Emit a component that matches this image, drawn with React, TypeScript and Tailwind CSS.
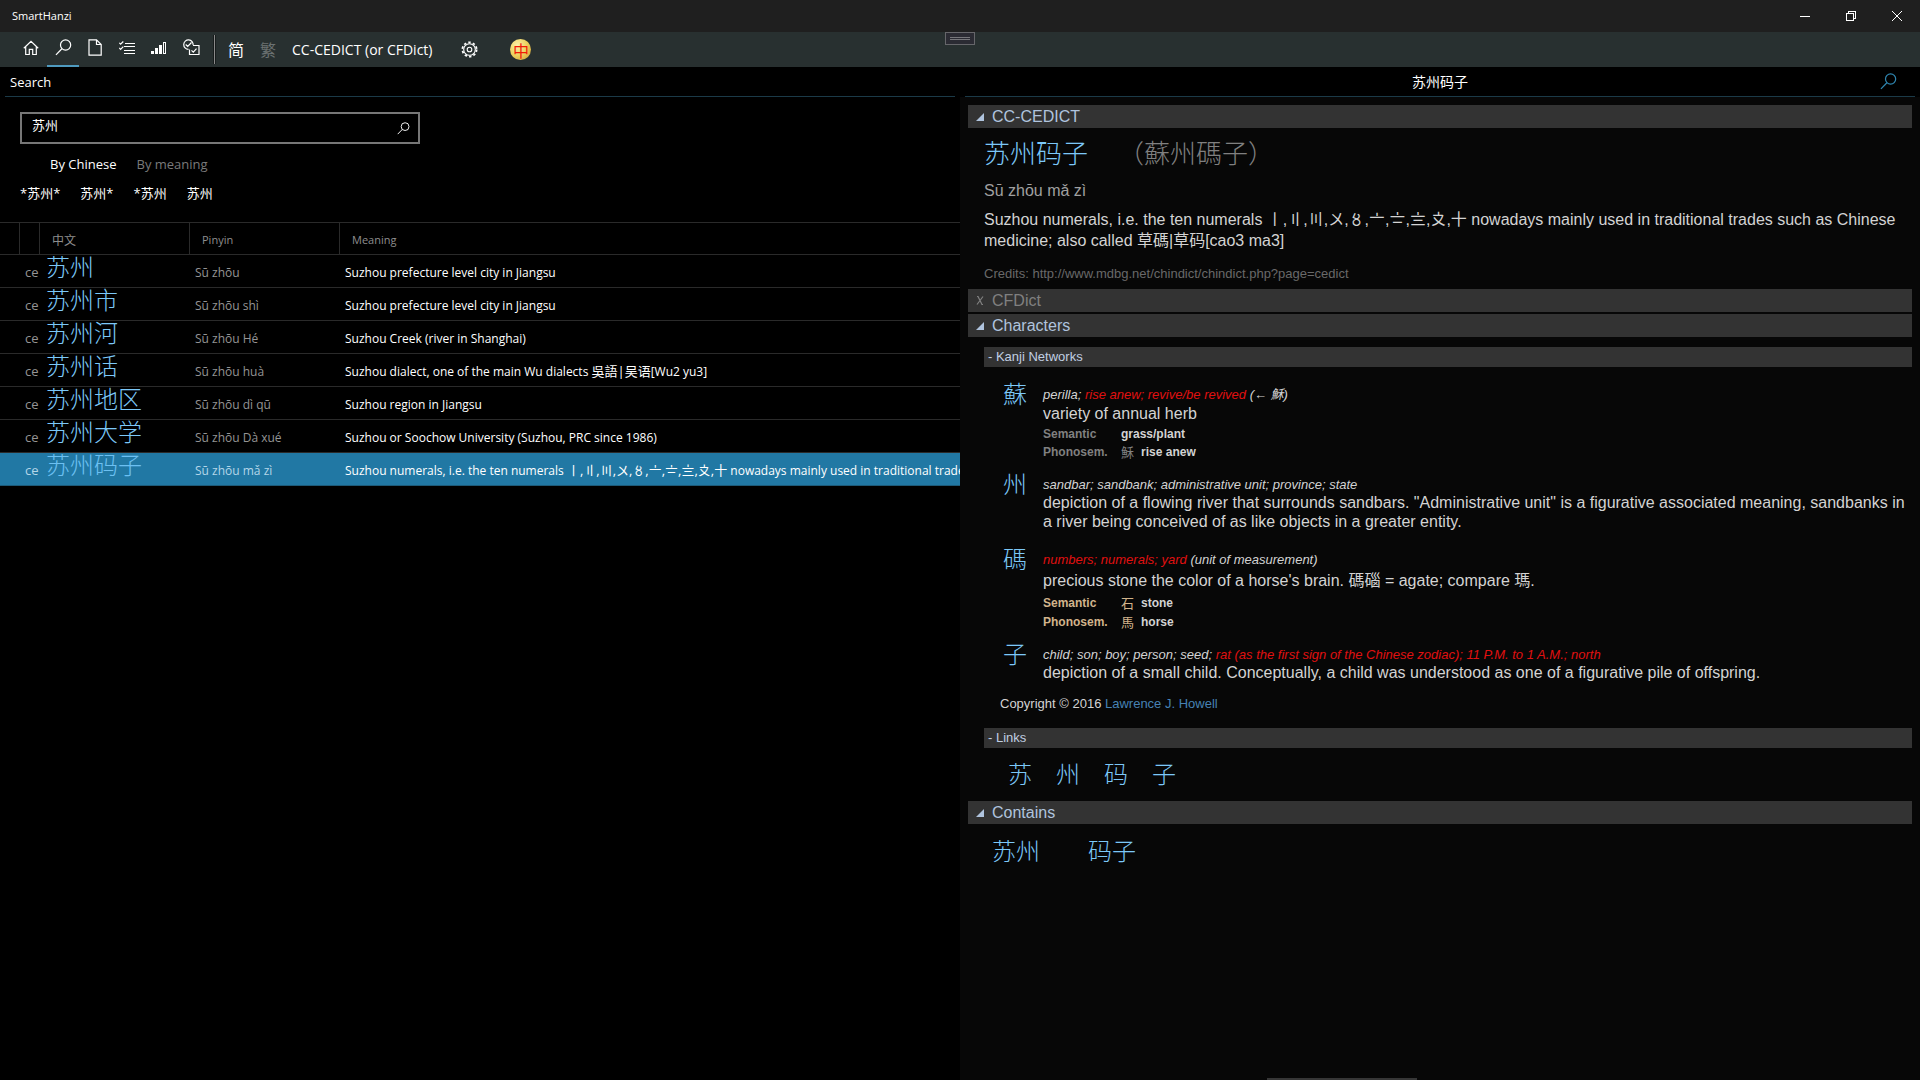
import React from "react";

const HAN = "font-['Noto_Sans_CJK_SC',sans-serif] font-light";

type Word = { hanzi: string; pinyin: string; meaning: string };

const words: Word[] = [
  { hanzi: "苏州", pinyin: "Sū zhōu", meaning: "Suzhou prefecture level city in Jiangsu" },
  { hanzi: "苏州市", pinyin: "Sū zhōu shì", meaning: "Suzhou prefecture level city in Jiangsu" },
  { hanzi: "苏州河", pinyin: "Sū zhōu Hé", meaning: "Suzhou Creek (river in Shanghai)" },
  { hanzi: "苏州话", pinyin: "Sū zhōu huà", meaning: "Suzhou dialect, one of the main Wu dialects 吳語|吴语[Wu2 yu3]" },
  { hanzi: "苏州地区", pinyin: "Sū zhōu dì qū", meaning: "Suzhou region in Jiangsu" },
  { hanzi: "苏州大学", pinyin: "Sū zhōu Dà xué", meaning: "Suzhou or Soochow University (Suzhou, PRC since 1986)" },
  {
    hanzi: "苏州码子",
    pinyin: "Sū zhōu mǎ zì",
    meaning: "Suzhou numerals, i.e. the ten numerals 〡,〢,〣,〤,〥,〦,〧,〨,〩,十 nowadays mainly used in traditional trades",
  },
];
const SELECTED = 6;

/* Sets runs of Chinese characters one pixel larger than the Latin text round them. */
function Mixed({ text }: { text: string }) {
  return (
    <>
      {text.split(/([\u3021-\u3029\u4e00-\u9fff][\u3021-\u3029\u4e00-\u9fff,|]*)/).map((part, i) =>
        i % 2 === 1 ? (
          <span key={i} className="text-[13px] leading-none">
            {part}
          </span>
        ) : (
          part
        ),
      )}
    </>
  );
}

function Magnifier({ className }: { className: string }) {
  return (
    <svg viewBox="0 0 18 18" className={className} fill="none" stroke="currentColor" strokeWidth="1.3">
      <circle cx="11.2" cy="6.4" r="5.4" />
      <path d="M7.3 10.3 1 16.8" />
    </svg>
  );
}

function ToolButton({ label, active, children }: { label: string; active?: boolean; children: React.ReactNode }) {
  return (
    <button
      aria-label={label}
      className={
        active
          ? "flex h-full w-8 items-center justify-center border-b-2 border-[#4f9bc0] pt-0.5 pb-1"
          : "flex h-full w-8 items-center justify-center border-b-2 border-transparent pt-0.5 pb-1"
      }
    >
      {children}
    </button>
  );
}

function TitleBar() {
  return (
    <header className="flex h-8 items-center justify-between bg-[#1f1f1f] pl-3">
      <h1 className="text-[11px]">SmartHanzi</h1>
      <div className="flex h-full">
        <button aria-label="Minimize" className="flex w-[46px] items-center justify-center">
          <svg className="size-[10px]" viewBox="0 0 10 10" stroke="white" shapeRendering="crispEdges">
            <path d="M0 5.5h10" />
          </svg>
        </button>
        <button aria-label="Restore" className="flex w-[46px] items-center justify-center">
          <svg className="size-[10px]" viewBox="0 0 10 10" stroke="white" fill="none" shapeRendering="crispEdges">
            <path d="M.5 2.5h7v7h-7zM2.5 2.5v-2h7v7h-2" />
          </svg>
        </button>
        <button aria-label="Close" className="flex w-[46px] items-center justify-center">
          <svg className="size-[10px]" viewBox="0 0 10 10" stroke="white">
            <path d="M0 0l10 10M10 0 0 10" />
          </svg>
        </button>
      </div>
    </header>
  );
}

function ToolBar() {
  return (
    <nav className="relative flex h-[35px] items-center bg-[#283030] pl-[15px]">
      <ToolButton label="Home">
        <svg className="size-4" viewBox="0 0 16 16" fill="none" stroke="currentColor" strokeWidth="1.2">
          <path d="M.8 8.3 8 1.4l7.2 6.9M2.7 6.8v7.7h3.6V9.3h3.4v5.2h3.6V6.8" />
        </svg>
      </ToolButton>
      <ToolButton label="Search" active>
        <Magnifier className="size-[17px]" />
      </ToolButton>
      <ToolButton label="Page">
        <svg className="h-[17px] w-[14px]" viewBox="0 0 14 17" fill="none" stroke="currentColor" strokeWidth="1.2">
          <path d="M1 .8h7.5l4.7 4.7v10.7H1zM8.5.8v4.7h4.7" />
        </svg>
      </ToolButton>
      <ToolButton label="Lists">
        <svg className="h-[14px] w-4" viewBox="0 0 16 14" fill="none" stroke="currentColor">
          <path d="M6 2.5h10M5 5.5h11M5 9.5h11M5 12.5h11" shapeRendering="crispEdges" />
          <path d="M.3 1.8 1.6 3.2 4.3.5M.3 7 1.6 8.4 4.3 5.7" strokeWidth="1.2" />
        </svg>
      </ToolButton>
      <ToolButton label="Levels">
        <svg className="h-[14px] w-4" viewBox="0 0 16 14" fill="currentColor" shapeRendering="crispEdges">
          <path d="M0 10h3v3H0zM4 7h3v6H4zM8 4h3v9H8z" />
          <path d="M12.5 1.5h2v11h-2z" fill="none" stroke="currentColor" />
        </svg>
      </ToolButton>
      <ToolButton label="Tests">
        <svg className="h-[17px] w-[17px]" viewBox="0 0 17 17" fill="none" stroke="currentColor" strokeWidth="1.2">
          <path d="M5.5 10.3A4.7 4.7 0 1 1 10.1 6.2M10 6.5h6v9H6.5v-5M2.7 5.5l2 2 3.8-4M8.5 11.3l1.8 1.8 3.2-3.4" />
        </svg>
      </ToolButton>
      <div className="ml-1.5 h-[29px] w-[3px] border-x border-x-[#171c1c] bg-[#8a8a8a]" />
      <button className="ml-3 text-base leading-6">简</button>
      <button className="ml-4 text-base leading-6 text-[#6c7272]">繁</button>
      <button className="ml-4 text-sm">CC-CEDICT (or CFDict)</button>
      <button aria-label="Settings" className="ml-[29px]">
        <svg className="size-[17px]" viewBox="0 0 17 17" fill="none" stroke="currentColor" strokeWidth="1.1">
          <circle cx="8.5" cy="8.5" r="2.3" />
          <circle cx="8.5" cy="8.5" r="5.8" />
          <circle cx="8.5" cy="8.5" r="7.1" strokeWidth="1.8" strokeDasharray="2.4 2.176" />
        </svg>
      </button>
      <button aria-label="About" className="ml-8">
        <span className="flex size-[21px] items-center justify-center rounded-full bg-radial-[at_35%_30%] from-[#fbf0a8] via-[#ecd25e] to-[#c9942c] font-['Noto_Sans_CJK_SC',sans-serif] text-base leading-none text-[#f01c08]">
          中
        </span>
      </button>
      <div className="absolute top-0 left-1/2 flex h-[13px] w-[30px] -translate-x-1/2 items-center justify-center border border-[#66666a] bg-[#2b2b33]">
        <div className="h-[3px] w-5 border-y border-[#77777b]" />
      </div>
    </nav>
  );
}

function SearchPane() {
  return (
    <section className="flex min-w-0 flex-col bg-black text-[13px]">
      <div className="mx-[5px] flex h-[30px] items-center border-b border-[#1b3a48] px-[5px] pt-0.5">
        <h2>Search</h2>
      </div>
      <form className="mt-[15px] ml-5 flex h-8 w-[400px] items-center border-2 border-[#777] pr-2 pl-2.5" onSubmit={(e) => e.preventDefault()}>
        <input aria-label="Search text" defaultValue="苏州" className="min-w-0 flex-1 bg-transparent pb-1 outline-none" />
        <button aria-label="Search">
          <Magnifier className="size-[13px]" />
        </button>
      </form>
      <div className="mt-[10px] ml-[50px] flex gap-5 leading-5">
        <button>By Chinese</button>
        <button className="text-[#7a7a7a]">By meaning</button>
      </div>
      <div className="mt-[9px] ml-5 flex gap-5 leading-5">
        <button>*苏州*</button>
        <button>苏州*</button>
        <button>*苏州</button>
        <button>苏州</button>
      </div>
      <table className="mt-[19px] w-full table-fixed border-separate border-spacing-0 text-left">
        <colgroup>
          <col className="w-5" />
          <col className="w-5" />
          <col className="w-[150px]" />
          <col className="w-[150px]" />
          <col />
        </colgroup>
        <thead>
          <tr className="h-[33px] text-[11px] text-[#8e8e8e] [&>th]:border-y [&>th]:border-r [&>th]:border-[#2a2a2a] [&>th]:p-0 [&>th]:pt-1 [&>th]:font-normal">
            <th />
            <th />
            <th className="!pl-3 text-xs">中文</th>
            <th className="!pl-3">Pinyin</th>
            <th className="!border-r-0 !pl-3">Meaning</th>
          </tr>
        </thead>
        <tbody>
          {words.map((w, i) => (
            <tr
              key={w.hanzi}
              className={
                i === SELECTED
                  ? "h-[33px] bg-[#2178a4] text-xs text-[#b4d6e8] [&>td]:border-b [&>td]:border-[#1d5a78] [&>td]:p-0"
                  : "h-[33px] text-xs text-[#949494] [&>td]:border-b [&>td]:border-[#2a2a2a] [&>td]:p-0"
              }
            >
              <td />
              <td className="!pt-1 !pl-[5px] text-[13px] whitespace-nowrap">ce</td>
              <td className="!pl-1.5 align-top">
                <a
                  href="#"
                  className={
                    i === SELECTED
                      ? `${HAN} block text-2xl leading-[22px] text-[#6cc0f2]`
                      : `${HAN} block text-2xl leading-[22px] text-[#7cc8f8]`
                  }
                >
                  {w.hanzi}
                </a>
              </td>
              <td className="!pt-1 !pl-[5px]">{w.pinyin}</td>
              <td className="overflow-hidden !pt-1 !pl-[5px] whitespace-nowrap text-white">
                <Mixed text={w.meaning} />
              </td>
            </tr>
          ))}
        </tbody>
      </table>
    </section>
  );
}

function SectionBar({ title, open = true }: { title: string; open?: boolean }) {
  return (
    <h3>
      <button
        className={
          open
            ? "flex h-[23px] w-full items-center gap-2 bg-[#333] pl-2 text-base text-[#b0c4de]"
            : "flex h-[23px] w-full items-center gap-2 bg-[#333] pl-2 text-base text-[#808080]"
        }
      >
        {open ? (
          <svg className="size-2" viewBox="0 0 8 8" fill="currentColor">
            <path d="M8 0v8H0z" />
          </svg>
        ) : (
          <svg className="h-[9px] w-2" viewBox="0 0 8 9" fill="none" stroke="currentColor" strokeWidth="1.2">
            <path d="M1 .5h1l4 8h1M7 .5 1 8.5" />
          </svg>
        )}
        {title}
      </button>
    </h3>
  );
}

function SubBar({ title }: { title: string }) {
  return (
    <h4>
      <button className="flex h-5 w-full items-center bg-[#333] pl-1 text-[13px] text-[#c0cfe2]">- {title}</button>
    </h4>
  );
}

function Entry({ glyph, gloss, children }: { glyph: string; gloss: React.ReactNode; children: React.ReactNode }) {
  return (
    <article className="grid grid-cols-[40px_1fr] items-start pl-[19px]">
      <a href="#" className={`${HAN} text-2xl leading-5 text-[#7cc8f8]`}>
        {glyph}
      </a>
      <div>
        <p className="pt-1 text-[13px] leading-4 italic">{gloss}</p>
        {children}
      </div>
    </article>
  );
}

function Part({ label, glyph, meaning, color }: { label: string; glyph?: string; meaning: string; color: string }) {
  return (
    <p className="grid grid-cols-[78px_auto_1fr] text-xs leading-[18px] font-bold">
      <span className={color}>{label}</span>
      <span className={color}>
        {glyph ? <span className="mr-[7px] font-['Noto_Sans_CJK_SC',sans-serif] text-[13px] font-normal">{glyph}</span> : null}
      </span>
      <span>{meaning}</span>
    </p>
  );
}

const red = "text-[#e01010]";

function DetailPane() {
  return (
    <section className="flex min-w-0 flex-col bg-[#070707]">
      <div className="bg-black px-[5px]">
        <div className="grid h-[30px] grid-cols-[1fr_auto_1fr] items-center border-b border-[#1b3a48]">
          <span />
          <h2 className="text-sm leading-5">苏州码子</h2>
          <button aria-label="Search" className="mr-[18px] justify-self-end text-[#2f86b0]">
            <Magnifier className="size-[17px]" />
          </button>
        </div>
      </div>
      <div className="mt-2 flex-1 pr-2 pl-2 font-['Liberation_Sans','Noto_Sans_CJK_SC',sans-serif] text-[#d3d3d3]">
        <SectionBar title="CC-CEDICT" />
        <div className="pl-4">
          <p className={`${HAN} flex gap-[30px] pt-[10px] text-[26px] leading-7`}>
            <a href="#" className="text-[#7cc8f8]">苏州码子</a>
            <span className="text-[#808080]">（蘇州碼子）</span>
          </p>
          <p className="mt-[15px] text-base leading-5 text-[#a0a0a0]">Sū zhōu mǎ zì</p>
          <p className="mt-2 pr-4 text-base leading-[21px]">
            Suzhou numerals, i.e. the ten numerals 〡,〢,〣,〤,〥,〦,〧,〨,〩,十 nowadays mainly used in traditional trades such as Chinese
            medicine; also called 草碼|草码[cao3 ma3]
          </p>
          <p className="mt-[13px] pb-[5px] text-[13px] leading-5 text-[#696969]">Credits: http://www.mdbg.net/chindict/chindict.php?page=cedict</p>
        </div>
        <SectionBar title="CFDict" open={false} />
        <div className="mt-0.5">
          <SectionBar title="Characters" />
        </div>
        <div className="mt-[10px] pl-4">
          <SubBar title="Kanji Networks" />
          <div className="mt-4 flex flex-col">
            <Entry
              glyph="蘇"
              gloss={
                <>
                  perilla; <span className={red}>rise anew; revive/be revived</span> (← 穌)
                </>
              }
            >
              <p className="text-base leading-[22px]">variety of annual herb</p>
              <Part label="Semantic" meaning="grass/plant" color="text-[#808080]" />
              <Part label="Phonosem." glyph="穌" meaning="rise anew" color="text-[#808080]" />
            </Entry>
            <div className="mt-[11px] mb-[17px]">
              <Entry glyph="州" gloss="sandbar; sandbank; administrative unit; province; state">
                <p className="text-base leading-[19px]">
                  depiction of a flowing river that surrounds sandbars. "Administrative unit" is a figurative associated meaning, sandbanks in
                  a river being conceived of as like objects in a greater entity.
                </p>
              </Entry>
            </div>
            <Entry
              glyph="碼"
              gloss={
                <>
                  <span className={red}>numbers; numerals; yard</span> (unit of measurement)
                </>
              }
            >
              <p className="text-base leading-[26px]">precious stone the color of a horse's brain. 碼碯 = agate; compare 瑪.</p>
              <Part label="Semantic" glyph="石" meaning="stone" color="text-[#d2b48c]" />
              <Part label="Phonosem." glyph="馬" meaning="horse" color="text-[#d2b48c]" />
            </Entry>
            <div className="mt-[11px]">
              <Entry
                glyph="子"
                gloss={
                  <>
                    child; son; boy; person; seed;{" "}
                    <span className={red}>rat (as the first sign of the Chinese zodiac); 11 P.M. to 1 A.M.; north</span>
                  </>
                }
              >
                <p className="text-base leading-[19px]">
                  depiction of a small child. Conceptually, a child was understood as one of a figurative pile of offspring.
                </p>
              </Entry>
            </div>
          </div>
          <p className="mt-3 mb-[14px] pl-4 text-[13px] leading-5">
            Copyright © 2016{" "}
            <a href="#" className="text-[#4682b4]">
              Lawrence J. Howell
            </a>
          </p>
          <SubBar title="Links" />
          <div className={`${HAN} flex gap-6 pt-[11px] pb-[14px] pl-6 text-2xl leading-7 text-[#7cc8f8]`}>
            {["苏", "州", "码", "子"].map((c) => (
              <a key={c} href="#">
                {c}
              </a>
            ))}
          </div>
        </div>
        <SectionBar title="Contains" />
        <div className={`${HAN} flex gap-12 pt-3 pl-6 text-2xl leading-7 text-[#7cc8f8]`}>
          <a href="#">苏州</a>
          <a href="#">码子</a>
        </div>
      </div>
      <div className="ml-[32%] h-0.5 w-[150px] bg-[#363636]" />
    </section>
  );
}

export default function App() {
  return (
    <div className="flex min-h-screen flex-col bg-black font-['Open_Sans','Noto_Sans_CJK_SC',sans-serif] text-white">
      <TitleBar />
      <ToolBar />
      <main className="grid flex-1 grid-cols-2">
        <SearchPane />
        <DetailPane />
      </main>
    </div>
  );
}
